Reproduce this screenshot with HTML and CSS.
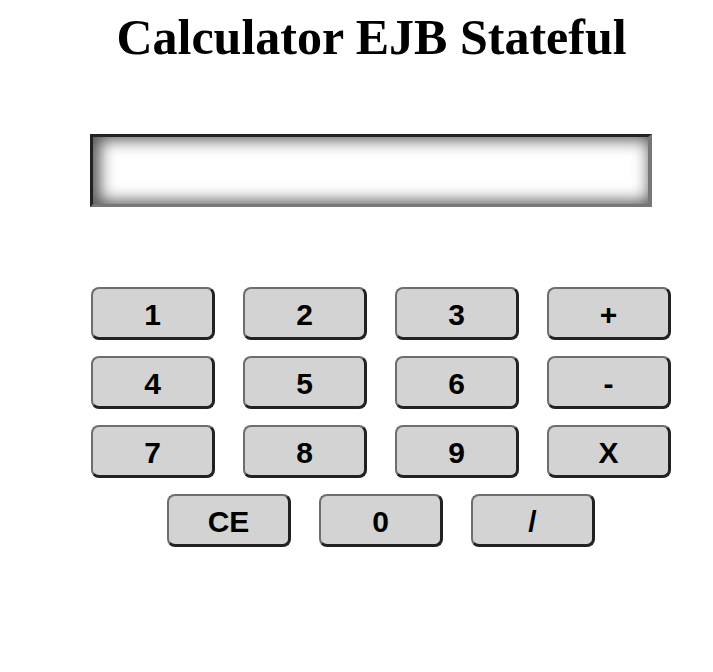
FILE: index.html
```html
<!DOCTYPE html>
<html>
<head>
<meta charset="utf-8">
<title>Calculator EJB Stateful</title>
<link rel="stylesheet" href="styles.css">
</head>
<body>
<h1 class="title">Calculator EJB Stateful</h1>
<div class="display"></div>
<div class="keys">
  <div class="row">
    <button class="key">1</button>
    <button class="key">2</button>
    <button class="key">3</button>
    <button class="key">+</button>
  </div>
  <div class="row">
    <button class="key">4</button>
    <button class="key">5</button>
    <button class="key">6</button>
    <button class="key">-</button>
  </div>
  <div class="row">
    <button class="key">7</button>
    <button class="key">8</button>
    <button class="key">9</button>
    <button class="key">X</button>
  </div>
  <div class="row">
    <button class="key">CE</button>
    <button class="key">0</button>
    <button class="key">/</button>
  </div>
</div>
</body>
</html>
```
FILE: styles.css
```css
html, body {
  margin: 0;
  padding: 0;
  background: #fff;
}
body {
  width: 713px;
}
.title {
  margin: 0;
  padding-top: 5px;
  padding-left: 30px;
  text-align: center;
  font-family: "Liberation Serif", "Times New Roman", serif;
  font-weight: bold;
  font-size: 50px;
  line-height: 64px;
  color: #000;
}
.display {
  box-sizing: border-box;
  margin: 65px 0 0 90px;
  width: 562px;
  height: 73px;
  border-style: solid;
  border-width: 3px 4px 3px 3px;
  border-color: #222 #777 #777 #222;
  background: #fff;
  box-shadow: inset 4px 0 16px 3px #555;
}
.keys {
  margin: 80px 0 0 91px;
  width: 580px;
  display: flex;
  flex-direction: column;
  gap: 16px;
}
.row {
  display: flex;
  justify-content: center;
  gap: 28px;
}
.key {
  box-sizing: border-box;
  width: 124px;
  height: 53px;
  margin: 0;
  padding: 3px 0 0 0;
  border-style: solid;
  border-width: 2px 3px 3px 2px;
  border-color: #6e6e6e #222 #222 #6e6e6e;
  border-radius: 8px;
  background: #d3d3d3;
  font-family: "Liberation Sans", Arial, sans-serif;
  font-weight: bold;
  font-size: 30px;
  color: #000;
}
```
